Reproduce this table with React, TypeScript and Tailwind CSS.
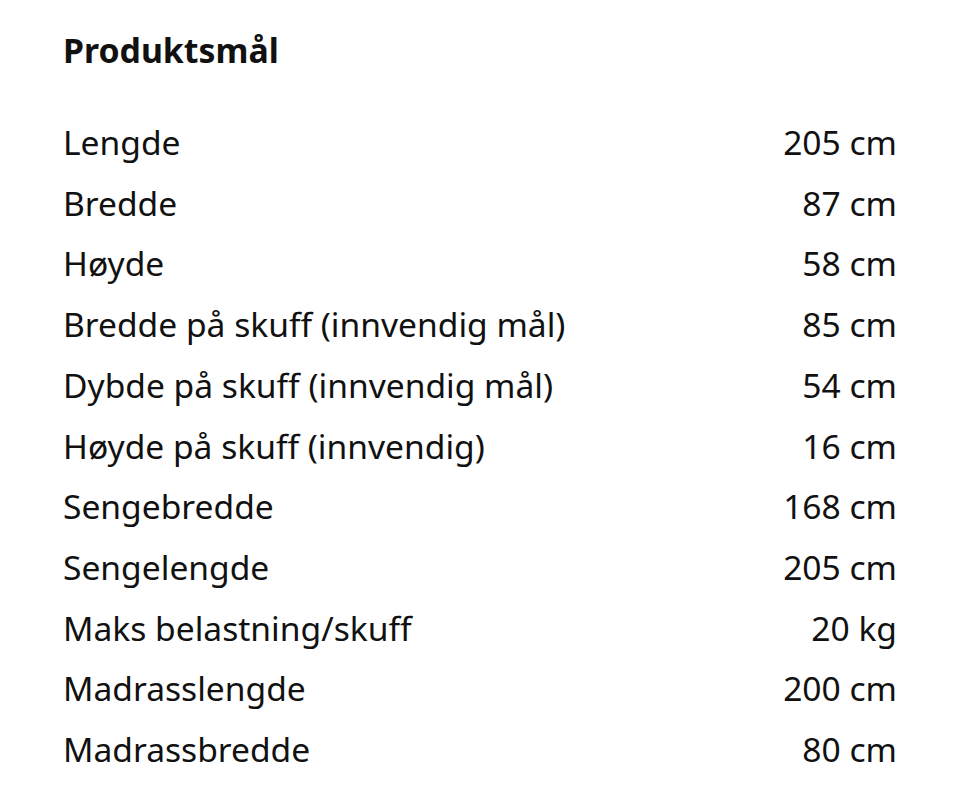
const rows: [string, string][] = [
  ['Lengde', '205 cm'],
  ['Bredde', '87 cm'],
  ['Høyde', '58 cm'],
  ['Bredde på skuff (innvendig mål)', '85 cm'],
  ['Dybde på skuff (innvendig mål)', '54 cm'],
  ['Høyde på skuff (innvendig)', '16 cm'],
  ['Sengebredde', '168 cm'],
  ['Sengelengde', '205 cm'],
  ['Maks belastning/skuff', '20 kg'],
  ['Madrasslengde', '200 cm'],
  ['Madrassbredde', '80 cm'],
]

export default function App() {
  return (
    <main className="w-[960px] h-[790px] bg-white text-[#111111] font-['Noto_Sans',sans-serif] pl-[63px] pr-[63px] pt-[28px]">
      <h2 className="text-[33.8px] leading-[44px] font-bold">Produktsmål</h2>
      <dl className="mt-[40px]">
        {rows.map(([label, value]) => (
          <div key={label} className="flex justify-between text-[33.6px] leading-[60.7px]">
            <dt>{label}</dt>
            <dd>{value}</dd>
          </div>
        ))}
      </dl>
    </main>
  )
}
